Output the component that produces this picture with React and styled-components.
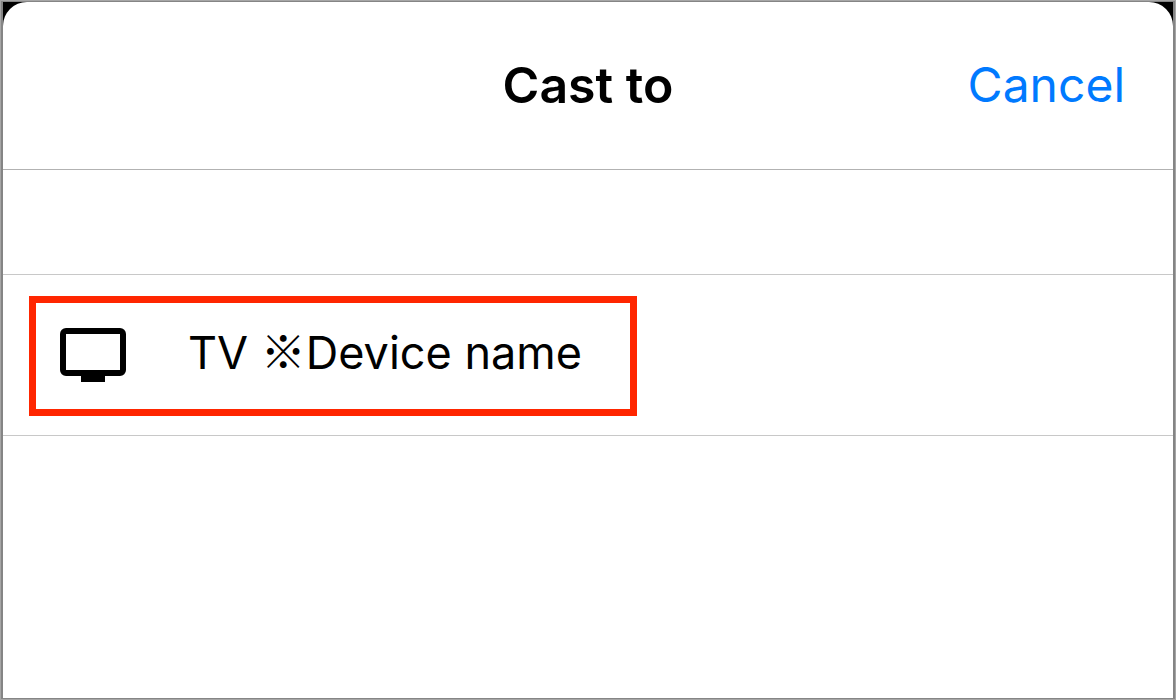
import React from 'react';
import styled, { createGlobalStyle } from 'styled-components';

const GlobalStyle = createGlobalStyle`
  * {
    box-sizing: border-box;
  }

  body {
    margin: 0;
    background: #ffffff;
    font-family: Inter, "Noto Sans CJK JP", sans-serif;
    -webkit-font-smoothing: antialiased;
  }
`;

const Frame = styled.main`
  display: flex;
  min-height: 100vh;
  border: 1px solid #a6a6a6;
  background: #000000;
`;

const Screen = styled.div`
  display: flex;
  flex: 1;
  border: solid #858585;
  border-width: 1px 2px 1px 2px;
`;

const Sheet = styled.section`
  flex: 1;
  border-radius: 24px 24px 0 0;
  background: #ffffff;
`;

// side columns are equal so the title stays centred
const Header = styled.header`
  display: grid;
  grid-template-columns: 1fr auto 1fr;
  align-items: center;
  height: 168px;
  padding: 0 48px 2px;
  border-bottom: 1px solid #b2b2b2;
`;

const Title = styled.h1`
  grid-column: 2;
  margin: 0;
  font-size: 50px;
  line-height: 60px;
  font-weight: 600;
  color: #000000;
`;

const CancelButton = styled.button`
  justify-self: end;
  padding: 0;
  border: 0;
  background: none;
  font-family: inherit;
  font-size: 48px;
  line-height: 60px;
  color: #007aff;
  cursor: pointer;
`;

const Spacer = styled.div`
  height: 105px;
  border-bottom: 1px solid #c8c8c8;
`;

const DeviceList = styled.ul`
  margin: 0;
  padding: 0;
  list-style: none;
`;

const DeviceRow = styled.li`
  display: flex;
  padding: 21px 26px 19px;
  border-bottom: 1px solid #c8c8c8;
`;

const DeviceButton = styled.button`
  display: flex;
  align-items: center;
  gap: 62px;
  height: 120px;
  padding: 0 48px 2px 24px;
  border: 7px solid ${(props) => (props.$highlighted ? '#ff2600' : 'transparent')};
  background: none;
  font-family: inherit;
  font-size: 45px;
  line-height: 60px;
  color: #000000;
  cursor: pointer;
`;

const DeviceName = styled.span`
  padding-bottom: 4px;
`;

// the reference mark is full width, so it takes the Japanese font
const Mark = styled.span`
  font-family: "Noto Sans CJK JP", sans-serif;
  line-height: 1;
`;

const TvIcon = () => (
  <svg width="66" height="54" viewBox="0 0 66 54" aria-hidden="true">
    <rect x="3" y="3" width="60" height="42" rx="3" fill="none" stroke="#000000" strokeWidth="6" />
    <rect x="21" y="46" width="24" height="8" fill="#000000" />
  </svg>
);

const devices = [{ id: 1, type: 'TV', name: 'Device name', highlighted: true }];

const App = () => (
  <>
    <GlobalStyle />
    <Frame>
      <Screen>
        <Sheet>
          <Header>
            <Title>Cast to</Title>
            <CancelButton type="button">Cancel</CancelButton>
          </Header>
          <Spacer />
          <DeviceList>
            {devices.map((device) => (
              <DeviceRow key={device.id}>
                <DeviceButton type="button" $highlighted={device.highlighted}>
                  <TvIcon />
                  <DeviceName>
                    {device.type} <Mark>※</Mark>{device.name}
                  </DeviceName>
                </DeviceButton>
              </DeviceRow>
            ))}
          </DeviceList>
        </Sheet>
      </Screen>
    </Frame>
  </>
);

export default App;
